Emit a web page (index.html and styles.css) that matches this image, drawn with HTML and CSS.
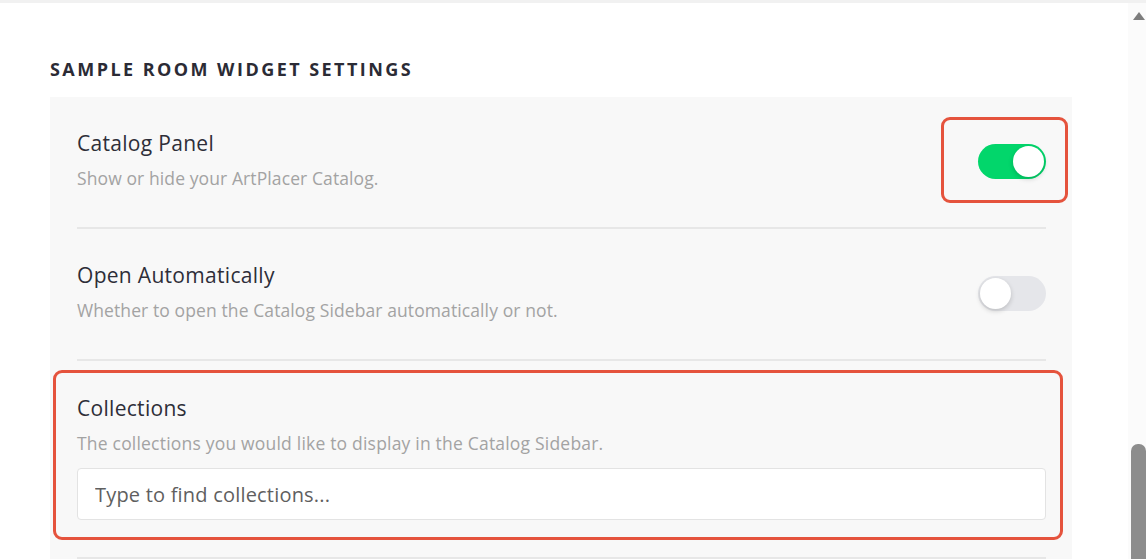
FILE: index.html
```html
<!DOCTYPE html>
<html>
<head>
<meta charset="utf-8">
<link rel="stylesheet" href="styles.css">
</head>
<body>
<div class="topline"></div>
<div class="page">
  <main class="main">
    <h2 class="heading">SAMPLE ROOM WIDGET SETTINGS</h2>
    <section class="panel">
      <div class="row">
        <div class="text">
          <div class="title">Catalog Panel</div>
          <div class="desc">Show or hide your ArtPlacer Catalog.</div>
        </div>
        <div class="toggle-wrap">
          <span class="toggle on"><span class="knob"></span></span>
          <span class="mark mark-toggle"></span>
        </div>
      </div>
      <div class="row">
        <div class="text">
          <div class="title">Open Automatically</div>
          <div class="desc">Whether to open the Catalog Sidebar automatically or not.</div>
        </div>
        <div class="toggle-wrap">
          <span class="toggle off"><span class="knob"></span></span>
        </div>
      </div>
      <div class="row col">
        <span class="mark mark-collections"></span>
        <div class="title">Collections</div>
        <div class="desc">The collections you would like to display in the Catalog Sidebar.</div>
        <input class="search" type="text" placeholder="Type to find collections...">
      </div>
    </section>
  </main>
  <aside class="scrollbar">
    <span class="arrow"></span>
    <span class="track"></span>
    <span class="thumb"></span>
  </aside>
</div>
</body>
</html>
```

FILE: styles.css
```css
* { box-sizing: border-box; }
html, body { margin: 0; padding: 0; background: #fff; }
body {
  font-family: "Open Sans", "Lato", sans-serif;
  width: 1146px;
  height: 559px;
  overflow: hidden;
}
.topline { height: 3px; background: #f1f1f1; }
.page { display: flex; height: 556px; }
.main { width: 1128px; padding-left: 50px; }
.heading {
  margin: 0;
  padding-top: 54px;
  height: 94px;
  font-size: 18px;
  font-weight: 700;
  letter-spacing: 2.45px;
  color: #2b2b35;
  line-height: 24px;
}
.panel {
  width: 1022px;
  background: #f8f8f8;
  padding: 0 26px 0 27px;
  height: 462px;
}
.row {
  display: flex;
  align-items: center;
  justify-content: space-between;
  border-bottom: 2px solid #e7e7e7;
  height: 132px;
  position: relative;
}
.row.col {
  flex-direction: column;
  align-items: stretch;
  justify-content: flex-start;
  padding-top: 34px;
  height: 198px;
}
.title {
  font-size: 21px;
  line-height: 26px;
  color: #2e2e38;
  letter-spacing: 0.3px;
}
.desc {
  font-size: 17.5px;
  line-height: 24px;
  color: #a3a3a3;
  margin-top: 10px;
  letter-spacing: 0.1px;
}
.row.col .desc { letter-spacing: 0.2px; }
.row .text { margin-top: -4px; }
.toggle-wrap { position: relative; margin-top: -2px; }
.toggle {
  display: block;
  width: 68px;
  height: 35px;
  border-radius: 18px;
  position: relative;
}
.toggle.on { background: #02d66b; }
.toggle.off { background: #e5e6ea; }
.knob {
  position: absolute;
  top: 2px;
  width: 31px;
  height: 31px;
  border-radius: 50%;
  background: #fff;
  box-shadow: 0 2px 5px rgba(0,0,0,0.18);
}
.toggle.on .knob { right: 2px; }
.toggle.off .knob { left: 2px; }
.mark {
  position: absolute;
  border: 3px solid #e5533d;
  border-radius: 9px;
  pointer-events: none;
}
.mark-toggle {
  left: -37px;
  top: -27px;
  width: 127px;
  height: 86px;
}
.mark-collections {
  left: -24px;
  top: 9px;
  width: 1010px;
  height: 170px;
}
.search {
  margin-top: 13px;
  height: 52px;
  width: 100%;
  border: 1px solid #e3e3e3;
  border-radius: 4px;
  background: #fff;
  padding: 0 17px;
  font-family: inherit;
  font-size: 20px;
  letter-spacing: 0.2px;
  color: #555;
  outline: none;
}
.search::placeholder { color: #5f5f5f; }
.scrollbar {
  width: 18px;
  background: #fbfbfb;
  display: flex;
  flex-direction: column;
  align-items: flex-end;
}
.arrow {
  margin-top: 9px;
  margin-right: 1px;
  width: 0; height: 0;
  border-left: 6px solid transparent;
  border-right: 6px solid transparent;
  border-bottom: 8px solid #7d7d7d;
}
.track { flex: 1; }
.thumb {
  width: 15px;
  height: 115px;
  background: #8d8d8d;
  border-radius: 7px 7px 0 0;
}
```
